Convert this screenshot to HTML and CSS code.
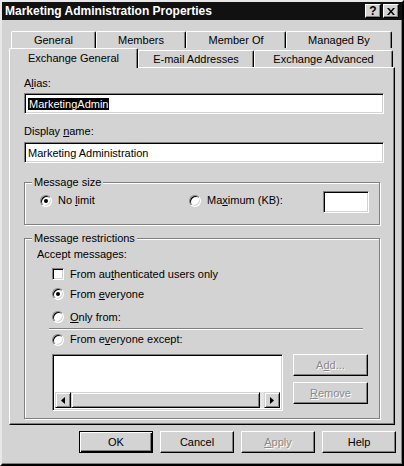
FILE: index.html
```html
<!DOCTYPE html>
<html lang="en">
<head>
    <meta charset="UTF-8">
    <title>Marketing Administration Properties</title>
    <link rel="stylesheet" href="styles.css">
</head>
<body>
    <div class="window">
        <div class="titlebar">
            <span class="title">Marketing Administration Properties</span>
            <span class="caption-btns">
                <span class="cbtn help">?</span>
                <span class="cbtn close">
                    <svg width="8" height="7" viewBox="0 0 8 7"><path d="M0 0h2l2 2.5L6 0h2L5 3.5 8 7H6L4 4.5 2 7H0l3-3.5z" fill="#000"/></svg>
                </span>
            </span>
        </div>

        <!-- tabs -->
        <div class="tab-row back">
            <div class="tab t-general">General</div>
            <div class="tab t-members">Members</div>
            <div class="tab t-memberof">Member Of</div>
            <div class="tab t-managed">Managed By</div>
        </div>
        <div class="tab-row front">
            <div class="tab selected t-exgen">Exchange General</div>
            <div class="tab t-email">E-mail Addresses</div>
            <div class="tab t-exadv">Exchange Advanced</div>
        </div>

        <div class="panel">
            <div class="field-label">A<u>l</u>ias:</div>
            <div class="textbox wide"><span class="sel">MarketingAdmin</span></div>

            <div class="field-label second">Display <u>n</u>ame:</div>
            <div class="textbox wide second-box">Marketing Administration</div>

            <fieldset class="group size-group">
                <legend>Message size</legend>
                <div class="size-row">
                    <span class="option no-limit"><span class="radio checked"></span><span>No <u>l</u>imit</span></span>
                    <span class="option"><span class="radio"></span><span>Ma<u>x</u>imum (KB):</span></span>
                    <div class="textbox kb"></div>
                </div>
            </fieldset>

            <fieldset class="group restrict-group">
                <legend>Message restrictions</legend>
                <div class="accept">Accept messages:</div>
                <div class="option row first-row"><span class="check"></span><span>From au<u>t</u>henticated users only</span></div>
                <div class="option row"><span class="radio checked"></span><span>From <u>e</u>veryone</span></div>
                <div class="option row only-row"><span class="radio"></span><span><u>O</u>nly from:</span></div>
                <div class="separator"></div>
                <div class="option row except-row"><span class="radio"></span><span>From e<u>v</u>eryone except:</span></div>

                <div class="list-area">
                    <div class="listbox">
                        <div class="list-body"></div>
                        <div class="hscroll">
                            <span class="sbtn"><svg width="4" height="7" viewBox="0 0 4 7"><path d="M4 0v7L0 3.5z" fill="#000"/></svg></span>
                            <span class="thumb"></span>
                            <span class="sbtn"><svg width="4" height="7" viewBox="0 0 4 7"><path d="M0 0v7l4-3.5z" fill="#000"/></svg></span>
                        </div>
                    </div>
                    <div class="side-btns">
                        <span class="btn disabled"><span>A<u>d</u>d...</span></span>
                        <span class="btn disabled"><span><u>R</u>emove</span></span>
                    </div>
                </div>
            </fieldset>
        </div>

        <div class="dlg-buttons">
            <span class="btn default">OK</span>
            <span class="btn">Cancel</span>
            <span class="btn disabled"><span><u>A</u>pply</span></span>
            <span class="btn">Help</span>
        </div>
    </div>
</body>
</html>
```

FILE: styles.css
```css
* {
    margin: 0;
    padding: 0;
    box-sizing: border-box;
}

body {
    background-color: #d3d3d3;
    font-family: 'Liberation Sans', Arial, sans-serif;
    font-size: 11px;
    color: #000;
}

.window {
    width: 404px;
    height: 466px;
    background-color: #d3d3d3;
    border: 2px solid;
    border-color: #e8e8e8 #000 #000 #e8e8e8;
    box-shadow: inset -1px -1px 0 #808080;
}

/* title bar */
.titlebar {
    height: 18px;
    background-color: #111;
    display: flex;
    align-items: center;
    padding: 0 3px 0 3px;
}

.title {
    color: #fff;
    font-weight: bold;
    font-size: 12px;
    flex: 1;
}

.caption-btns {
    display: flex;
    gap: 2px;
}

.cbtn {
    width: 16px;
    height: 14px;
    background-color: #d3d3d3;
    border: 1px solid;
    border-color: #fff #000 #000 #fff;
    box-shadow: inset -1px -1px 0 #808080;
    display: flex;
    align-items: center;
    justify-content: center;
    font-weight: bold;
    font-size: 12px;
    line-height: 12px;
}

/* tabs */
.tab-row {
    display: flex;
}

.tab-row.back {
    margin: 11px 0 0 9px;
    height: 17px;
}

.tab-row.front {
    margin-left: 7px;
    height: 19px;
    position: relative;
    z-index: 1;
}

.tab {
    height: 17px;
    line-height: 16px;
    text-align: center;
    background-color: #d3d3d3;
    border: 1px solid;
    border-bottom: none;
    border-color: #fff #000 #000 #fff;
    border-radius: 2px 2px 0 0;
    box-shadow: inset -1px 0 0 #808080;
}

.front .tab {
    margin-top: 2px;
}

.front .tab.selected {
    margin-top: 0;
    height: 20px;
    line-height: 18px;
}

.t-general { width: 85px; }
.t-members { width: 90px; }
.t-memberof { width: 100px; }
.t-managed { width: 106px; }
.t-exgen { width: 129px; }
.t-email { width: 116px; }
.t-exadv { width: 139px; }

/* page body */
.panel {
    margin: 0 7px 0 7px;
    border: 1px solid;
    border-color: #fff #000 #000 #fff;
    box-shadow: inset -1px -1px 0 #808080;
    padding: 9px 10px 5px 14px;
}

.field-label {
    line-height: 13px;
}

.field-label.second {
    margin-top: 11px;
}

.textbox {
    background-color: #fff;
    border: 1px solid;
    border-color: #808080 #fff #fff #808080;
    box-shadow: inset 1px 1px 0 #000, inset -1px -1px 0 #d3d3d3;
}

.textbox.wide {
    height: 21px;
    margin-top: 3px;
    padding: 3px 0 0 3px;
    line-height: 14px;
}

.textbox.second-box {
    margin-top: 4px;
}

.sel {
    background-color: #000;
    color: #fff;
    padding: 0 1px;
}

.group {
    border: 1px solid #808080;
    box-shadow: inset 1px 1px 0 #fff, 1px 1px 0 #fff;
    margin-right: 4px;
    padding: 0 0 0 7px;
}

.group legend {
    padding: 0 2px;
    line-height: 13px;
    background-color: #d3d3d3;
}

.size-group {
    margin-top: 13px;
    padding-bottom: 11px;
}

.size-row {
    display: flex;
    align-items: flex-start;
    margin: 2px 0 0 8px;
}

.option {
    display: flex;
    align-items: center;
    gap: 6px;
    line-height: 13px;
    margin-top: 3px;
}

.no-limit {
    width: 149px;
}

.textbox.kb {
    width: 46px;
    height: 22px;
    margin-left: auto;
    margin-right: 10px;
}

.radio {
    width: 12px;
    height: 12px;
    border-radius: 50%;
    background-color: #fff;
    border: 1px solid;
    border-color: #808080 #fff #fff #808080;
    box-shadow: inset 1px 1px 0 #000, inset -1px -1px 0 #d3d3d3;
    display: flex;
    align-items: center;
    justify-content: center;
}

.radio.checked::after {
    content: "";
    width: 4px;
    height: 4px;
    border-radius: 50%;
    background-color: #000;
}

.check {
    width: 12px;
    height: 12px;
    background-color: #fff;
    border: 1px solid;
    border-color: #808080 #fff #fff #808080;
    box-shadow: inset 1px 1px 0 #000, inset -1px -1px 0 #d3d3d3;
}

.restrict-group {
    margin-top: 7px;
    padding-bottom: 7px;
}

.accept {
    line-height: 13px;
    margin: 3px 0 0 5px;
}

.option.row {
    height: 20px;
    margin: 0 0 0 20px;
}

.option.first-row {
    margin-top: 3px;
}

.option.only-row {
    margin-top: 3px;
}

.separator {
    margin: 1px 0 0 17px;
    width: 314px;
    height: 2px;
    border-top: 1px solid #808080;
    border-bottom: 1px solid #fff;
}

.option.except-row {
    height: 19px;
}

.list-area {
    display: flex;
    align-items: flex-start;
    gap: 10px;
    margin: 5px 0 0 20px;
}

.listbox {
    width: 231px;
    height: 57px;
    background-color: #fff;
    border: 1px solid;
    border-color: #808080 #fff #fff #808080;
    box-shadow: inset 1px 1px 0 #000, inset -1px -1px 0 #d3d3d3;
    padding: 2px 2px 2px 2px;
    display: flex;
    flex-direction: column;
}

.list-body {
    flex: 1;
}

.hscroll {
    height: 16px;
    display: flex;
    background-color: #e4e4e4;
}

.sbtn,
.thumb {
    background-color: #d3d3d3;
    border: 1px solid;
    border-color: #d3d3d3 #000 #000 #d3d3d3;
    box-shadow: inset 1px 1px 0 #fff, inset -1px -1px 0 #808080;
}

.sbtn {
    width: 16px;
    display: flex;
    align-items: center;
    justify-content: center;
}

.thumb {
    flex: 1;
    margin-right: 4px;
}

.side-btns {
    display: flex;
    flex-direction: column;
    gap: 6px;
}

.btn {
    width: 75px;
    height: 22px;
    display: flex;
    align-items: center;
    justify-content: center;
    background-color: #d3d3d3;
    border: 1px solid;
    border-color: #fff #000 #000 #fff;
    box-shadow: inset -1px -1px 0 #808080;
}

.btn.disabled {
    color: #8a8a8a;
    text-shadow: 1px 1px 0 #fff;
}

.btn.default {
    border-color: #000;
    box-shadow: inset 1px 1px 0 #fff, inset -1px -1px 0 #000, inset -2px -2px 0 #808080;
}

.dlg-buttons {
    display: flex;
    justify-content: flex-end;
    gap: 7px;
    margin-top: 6px;
    padding-right: 6px;
}

.dlg-buttons .btn {
    width: 74px;
}
```
